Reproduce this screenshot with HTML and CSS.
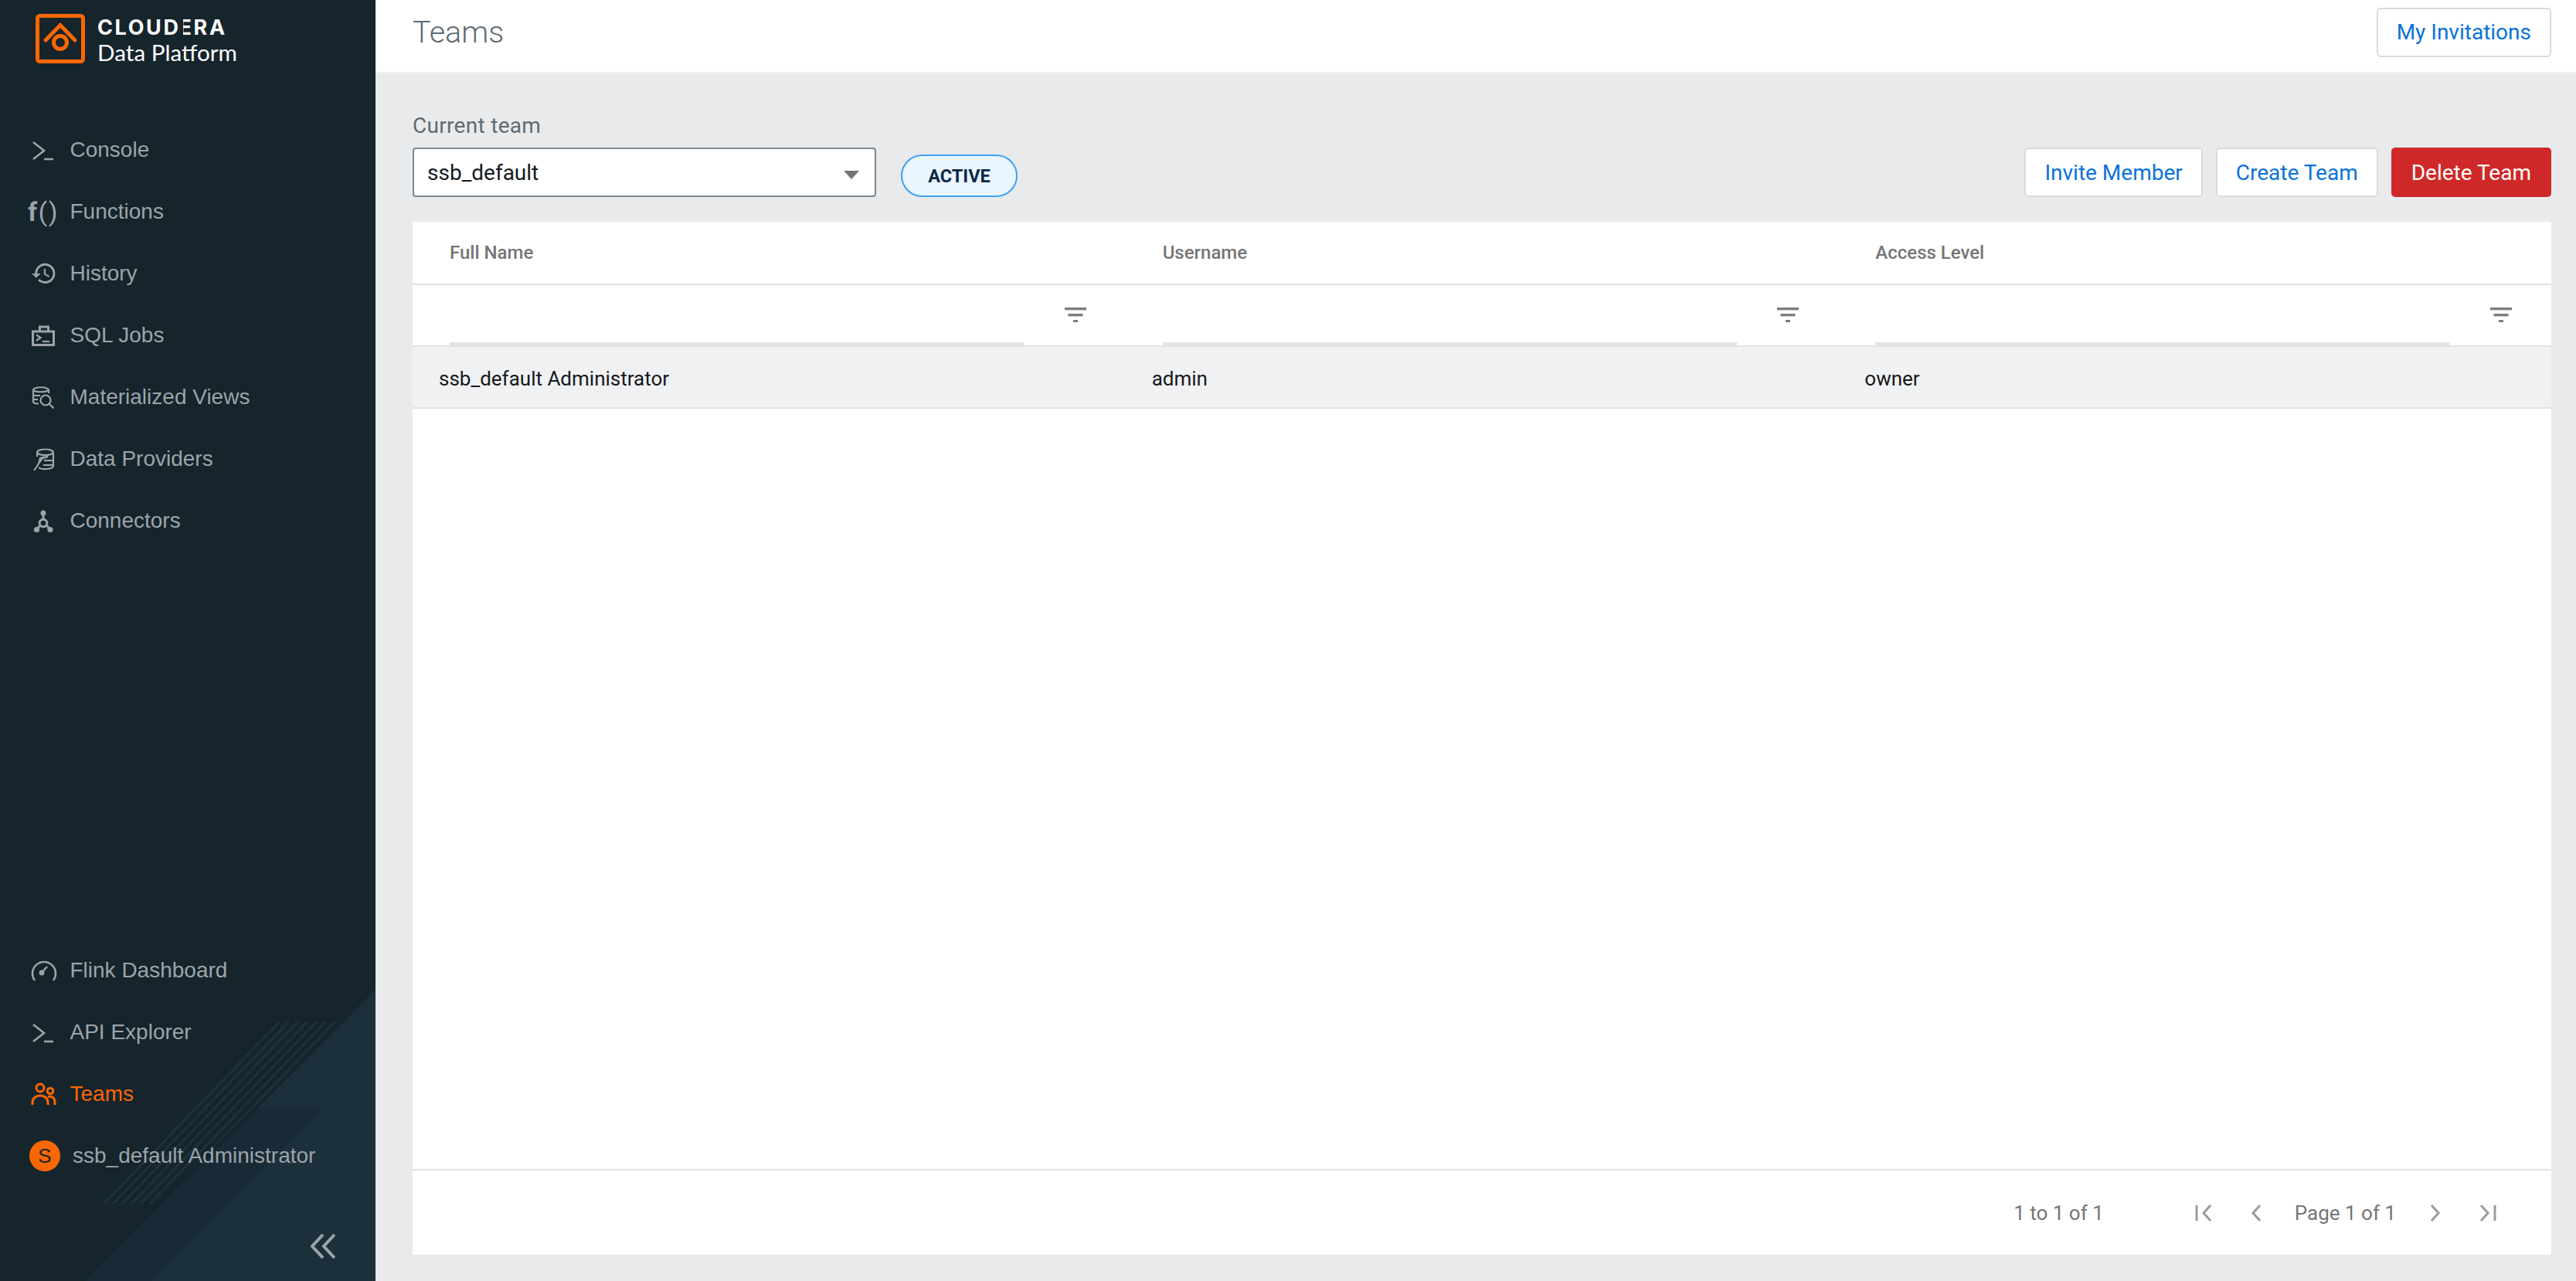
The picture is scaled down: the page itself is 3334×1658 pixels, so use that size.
FILE: index.html
```html
<!DOCTYPE html>
<html lang="en">
<head>
<meta charset="utf-8">
<title>Teams</title>
<link rel="stylesheet" href="styles.css">
</head>
<body>
<div class="app">
  <aside class="sidebar">
    <svg class="sidebar-art" viewBox="0 0 486 458" width="486" height="458" aria-hidden="true">
      <defs>
        <pattern id="stripes" width="8.6" height="8.6" patternUnits="userSpaceOnUse" patternTransform="rotate(-46)">
          <rect width="8.6" height="8.6" fill="#16242c"/>
          <rect width="8.6" height="2.6" fill="#1e333f"/>
        </pattern>
      </defs>
      <polygon points="110,458 333,235 417,235 195,458" fill="#182a35"/>
      <polygon points="486,81 486,458 195,458 417,235 333,235" fill="#1c303c"/>
      <polygon points="358,123 439,123 203,358 124,358" fill="url(#stripes)"/>
    </svg>
    <div class="brand">
      <svg class="brand-mark" viewBox="0 0 64 64" width="64" height="64" aria-hidden="true">
        <rect x="2.5" y="2.5" width="59" height="59" rx="3" fill="none" stroke="#f96702" stroke-width="5"/>
        <path d="M13 34 L32 14.500 L51 34" fill="none" stroke="#f96702" stroke-width="5" stroke-linecap="round" stroke-linejoin="miter"/>
        <circle cx="32" cy="37" r="8.500" fill="none" stroke="#f96702" stroke-width="5"/>
      </svg>
      <div class="brand-text">
        <div class="brand-name">CLOUD<span class="brand-e">E</span>RA</div>
        <div class="brand-product">Data Platform</div>
      </div>
    </div>

    <nav class="nav nav-top">
      <a class="nav-item">
        <svg class="nav-icon" viewBox="0 0 36 36"><path class="ln" d="M5 8 L19 19 L5 30"/><path class="ln" d="M19 30 H31"/></svg>
        <span>Console</span>
      </a>
      <a class="nav-item">
        <span class="nav-icon fn-icon"><b>f</b>()</span>
        <span>Functions</span>
      </a>
      <a class="nav-item">
        <svg class="nav-icon" viewBox="0 0 36 36"><g transform="translate(1.500 0.500) scale(1.450)"><path class="fl" d="M13 3a9 9 0 0 0-9 9H1l3.890 3.890.070.140L9 12H6c0-3.870 3.130-7 7-7s7 3.130 7 7-3.130 7-7 7c-1.930 0-3.680-.790-4.940-2.060l-1.420 1.420A8.954 8.954 0 0 0 13 21a9 9 0 0 0 0-18zm-1 5v5l4.280 2.540.720-1.210-3.500-2.080V8H12z"/></g></svg>
        <span>History</span>
      </a>
      <a class="nav-item">
        <svg class="nav-icon" viewBox="0 0 36 36"><path class="ln3" d="M4.500 13 H31.500 V30.500 H4.500 Z"/><path class="ln3" d="M13.500 13 V7 H24.500 V13"/><path class="ln2" d="M9 17.500 L14.500 21 L9 25"/><path class="ln2" d="M17 26 H26"/></svg>
        <span>SQL Jobs</span>
      </a>
      <a class="nav-item">
        <svg class="nav-icon" viewBox="0 0 36 36"><path class="ln2" d="M5 9 C5 4 25 4 25 9 V13"/><path class="ln2" d="M5 9 C8 12 21 12 25 9"/><path class="ln2" d="M5 9 V24 C5 25.500 8 26.500 12 26.500"/><path class="ln2" d="M5 16 H14"/><path class="ln2" d="M5 21 H11"/><circle class="ln2" cx="21" cy="22" r="6.500"/><path class="ln2" d="M26 27 L31.500 32.500" stroke-width="3"/></svg>
        <span>Materialized Views</span>
      </a>
      <a class="nav-item">
        <svg class="nav-icon" viewBox="0 0 36 36"><path class="ln2" d="M10 10 C10 4 31 4 31 10 V27 C31 32 15 32 12 29"/><path class="ln2" d="M10 10 C13 14 28 14 31 10"/><path class="ln2" d="M10 10 V15"/><path class="ln2" d="M19 20 H31"/><path class="ln2" d="M18 26 H31"/><path class="ln2" d="M6 33 L17 17 C20 17 22 16 24 15 C20 15 16 16 14 17 L12 24"/></svg>
        <span>Data Providers</span>
      </a>
      <a class="nav-item">
        <svg class="nav-icon" viewBox="0 0 36 36"><circle class="fl" cx="18" cy="8" r="3.500"/><circle class="fl" cx="9.500" cy="29.500" r="3.600"/><circle class="fl" cx="27" cy="29.500" r="3.600"/><circle class="ln3" cx="18" cy="21" r="4.800"/><path class="ln3" d="M18 9 V16"/><path class="ln3" d="M14 24 L9.500 29"/><path class="ln3" d="M22 24 L27 29"/></svg>
        <span>Connectors</span>
      </a>
    </nav>

    <nav class="nav nav-bottom">
      <a class="nav-item">
        <svg class="nav-icon" viewBox="0 0 36 36"><path class="ln" d="M7 31 A15 15 0 1 1 31 31" stroke-width="3"/><circle class="fl" cx="16" cy="21" r="3.500"/><path class="ln" d="M16 21 L23 13"/></svg>
        <span>Flink Dashboard</span>
      </a>
      <a class="nav-item">
        <svg class="nav-icon" viewBox="0 0 36 36"><path class="ln" d="M5 8 L19 19 L5 30"/><path class="ln" d="M19 30 H31"/></svg>
        <span>API Explorer</span>
      </a>
      <a class="nav-item nav-item-active">
        <svg class="nav-icon" viewBox="0 0 36 36"><circle class="ln-o" cx="14" cy="10" r="5"/><circle class="ln-o" cx="27" cy="14" r="3.800"/><path class="ln-o" d="M4 32 V29 C4 17 24 17 24 29 V32"/><path class="ln-o" d="M24 22 C28 20 33 22 33 29 V32"/></svg>
        <span>Teams</span>
      </a>
      <a class="nav-item nav-user">
        <span class="avatar">S</span>
        <span>ssb_default Administrator</span>
      </a>
      <div class="collapse">
        <svg viewBox="0 0 32 32" width="32" height="32" aria-hidden="true"><path class="ln-c" d="M16 1 L2 16 L16 31"/><path class="ln-c" d="M31 1 L17 16 L31 31"/></svg>
      </div>
    </nav>
  </aside>

  <div class="page">
    <header class="page-head">
      <h1 class="page-title">Teams</h1>
      <button class="btn">My Invitations</button>
    </header>
    <main class="content">
      <div class="toolbar">
        <div class="team-picker">
          <label class="field-label">Current team</label>
          <div class="select">ssb_default<span class="select-arrow"></span></div>
        </div>
        <span class="pill">ACTIVE</span>
        <div class="actions">
          <button class="btn">Invite Member</button>
          <button class="btn">Create Team</button>
          <button class="btn btn-danger">Delete Team</button>
        </div>
      </div>

      <section class="grid">
        <div class="grid-row grid-head">
          <div class="head-cell">Full Name</div>
          <div class="head-cell">Username</div>
          <div class="head-cell">Access Level</div>
        </div>
        <div class="grid-row grid-filter">
          <div class="filter-cell"><span class="filter-input"></span><svg class="filter-icon" viewBox="0 0 28 19"><rect width="28" height="3.400"/><rect x="4.500" y="8" width="19" height="3.400"/><rect x="11" y="16" width="6" height="3"/></svg></div>
          <div class="filter-cell"><span class="filter-input"></span><svg class="filter-icon" viewBox="0 0 28 19"><rect width="28" height="3.400"/><rect x="4.500" y="8" width="19" height="3.400"/><rect x="11" y="16" width="6" height="3"/></svg></div>
          <div class="filter-cell"><span class="filter-input"></span><svg class="filter-icon" viewBox="0 0 28 19"><rect width="28" height="3.400"/><rect x="4.500" y="8" width="19" height="3.400"/><rect x="11" y="16" width="6" height="3"/></svg></div>
        </div>
        <div class="grid-row grid-data">
          <div class="data-cell">ssb_default Administrator</div>
          <div class="data-cell">admin</div>
          <div class="data-cell">owner</div>
        </div>
        <div class="grid-fill"></div>
        <footer class="pager">
          <span class="pager-count">1 to 1 of 1</span>
          <svg class="pager-icon pager-first" viewBox="0 0 24 24"><path d="M3 2 V22"/><path d="M21 2 L12 12 L21 22"/></svg>
          <svg class="pager-icon pager-prev" viewBox="0 0 24 24"><path d="M17 2 L8 12 L17 22"/></svg>
          <span class="pager-page">Page 1 of 1</span>
          <svg class="pager-icon pager-next" viewBox="0 0 24 24"><path d="M7 2 L16 12 L7 22"/></svg>
          <svg class="pager-icon pager-last" viewBox="0 0 24 24"><path d="M3 2 L12 12 L3 22"/><path d="M21 2 V22"/></svg>
        </footer>
      </section>
    </main>
  </div>
</div>
</body>
</html>
```
FILE: styles.css
```css
* { box-sizing: border-box; }
html, body { margin: 0; height: 100%; }
body { font-family: Roboto, "Liberation Sans", sans-serif; background: #e9eaec; overflow: hidden; }
.app { display: flex; height: 1658px; }

.sidebar { position: relative; flex: 0 0 486px; display: flex; flex-direction: column; background: #16242c; overflow: hidden; font-family: "Liberation Sans", Arial, sans-serif; }
.sidebar-art { position: absolute; left: 0; bottom: 0; }
.brand { position: relative; display: flex; gap: 16px; padding: 18px 0 0 46px; height: 100px; align-items: flex-start; }
.brand-text { padding-top: 3px; }
.brand-name { font-family: Inter, sans-serif; font-weight: 700; font-size: 27px; line-height: 29px; letter-spacing: 2.6px; color: #fff; }
.brand-e { position: relative; display: inline-block; margin-left: -2px; }
.brand-e::after { content: ""; position: absolute; left: 1px; top: 4px; bottom: 4px; width: 4px; background: #16242c; }
.brand-product { font-family: Lato, sans-serif; font-weight: 400; font-size: 29.700px; line-height: 36px; color: #fff; }

.nav { position: relative; display: flex; flex-direction: column; }
.nav-top { margin-top: 54px; }
.nav-bottom { margin-top: auto; }
.nav-item { display: flex; align-items: center; gap: 16.500px; height: 80px; padding-left: 38px; font-size: 28px; color: #9ca4aa; white-space: nowrap; }
.nav-item-active { color: #f96702; }
.nav-icon { flex: 0 0 36px; width: 36px; height: 36px; }
.ln { fill: none; stroke: #9ca4aa; stroke-width: 2.600; }
.ln2 { fill: none; stroke: #9ca4aa; stroke-width: 2.200; }
.ln3 { fill: none; stroke: #9ca4aa; stroke-width: 3; }
.fl { fill: #9ca4aa; }
.ln-o { fill: none; stroke: #f96702; stroke-width: 3; }
.ln-c { fill: none; stroke: #9ca4aa; stroke-width: 4; }
.fn-icon { display: flex; align-items: center; justify-content: center; font-family: Roboto, sans-serif; font-size: 34px; line-height: 36px; letter-spacing: 1.500px; white-space: nowrap; }
.fn-icon b { font-weight: 700; }
.nav-user { gap: 16px; }
.avatar { flex: 0 0 40px; width: 40px; height: 40px; border-radius: 50%; background: #f96702; color: #16242c; font-size: 26px; display: flex; align-items: center; justify-content: center; }
.collapse { display: flex; justify-content: flex-end; align-items: center; height: 122px; padding: 31px 52px 0 0; }

.page { flex: 1; min-width: 0; display: flex; flex-direction: column; }
.page-head { flex: 0 0 95px; display: flex; align-items: center; justify-content: space-between; padding: 0 32px 10px 48px; background: #fff; border-bottom: 2px solid #eff0f2; }
.page-title { margin: 0; font-weight: 300; font-size: 39.500px; color: #5e6a72; }
.content { flex: 1; min-height: 0; display: flex; flex-direction: column; padding: 52px 32px 34px 48px; }
.btn { height: 64px; padding: 0 24px; font-family: Roboto, sans-serif; font-size: 28px; color: #0a72d8; background: #fff; border: 2px solid #d9dade; border-radius: 5px; white-space: nowrap; }
.btn-danger { background: #cf2828; border-color: #cf2828; color: #fff; }

.toolbar { display: flex; align-items: flex-end; }
.team-picker { display: flex; flex-direction: column; width: 600px; }
.field-label { font-size: 28px; letter-spacing: .3px; line-height: 32px; color: #5f6a72; margin-bottom: 12px; }
.select { position: relative; height: 64px; padding-left: 17px; padding-top: 1px; display: flex; align-items: center; font-size: 28px; color: #15191c; background: #fff; border: 2px solid #7f878d; border-radius: 4px; }
.select-arrow { position: absolute; right: 20px; top: 28px; border-left: 10px solid transparent; border-right: 10px solid transparent; border-top: 11px solid #757575; }
.pill { margin-left: 32px; width: 151px; height: 55px; display: flex; align-items: center; justify-content: center; font-size: 23.500px; font-weight: 700; color: #0b2a4a; background: #ebf5fd; border: 2px solid #3fa0f5; border-radius: 28px; }
.actions { margin-left: auto; display: flex; gap: 17px; }

.grid { flex: 1; min-height: 0; margin-top: 32px; display: flex; flex-direction: column; background: #fff; }
.grid-row { display: grid; grid-template-columns: repeat(3, 1fr); border-bottom: 2px solid #e2e2e2; }
.grid-head { height: 82px; }
.head-cell { display: flex; align-items: center; padding-left: 48px; font-size: 24px; font-weight: 500; color: #757575; }
.grid-filter { height: 80px; }
.filter-cell { position: relative; display: flex; padding-left: 48px; }
.filter-input { align-self: flex-end; width: 743px; height: 4px; background: #e2e2e2; }
.filter-icon { position: absolute; left: 843.500px; top: 29px; width: 28px; height: 19px; fill: #7d7d7d; }
.grid-data { height: 80px; background: #f0f1f3; }
.data-cell { display: flex; align-items: center; padding-left: 34px; padding-top: 3px; font-size: 26px; color: #15191c; }
.grid-fill { flex: 1; }
.pager { flex: 0 0 111px; display: flex; align-items: center; justify-content: flex-end; padding-right: 70px; border-top: 2px solid #e2e2e2; font-size: 26px; color: #757575; }
.pager-icon { width: 24px; height: 24px; fill: none; stroke: #9b9b9b; stroke-width: 3; }
.pager-first { margin-left: 117px; }
.pager-prev { margin-left: 44px; }
.pager-page { margin-left: 38px; }
.pager-next { margin-left: 39px; }
.pager-last { margin-left: 44px; }
```
